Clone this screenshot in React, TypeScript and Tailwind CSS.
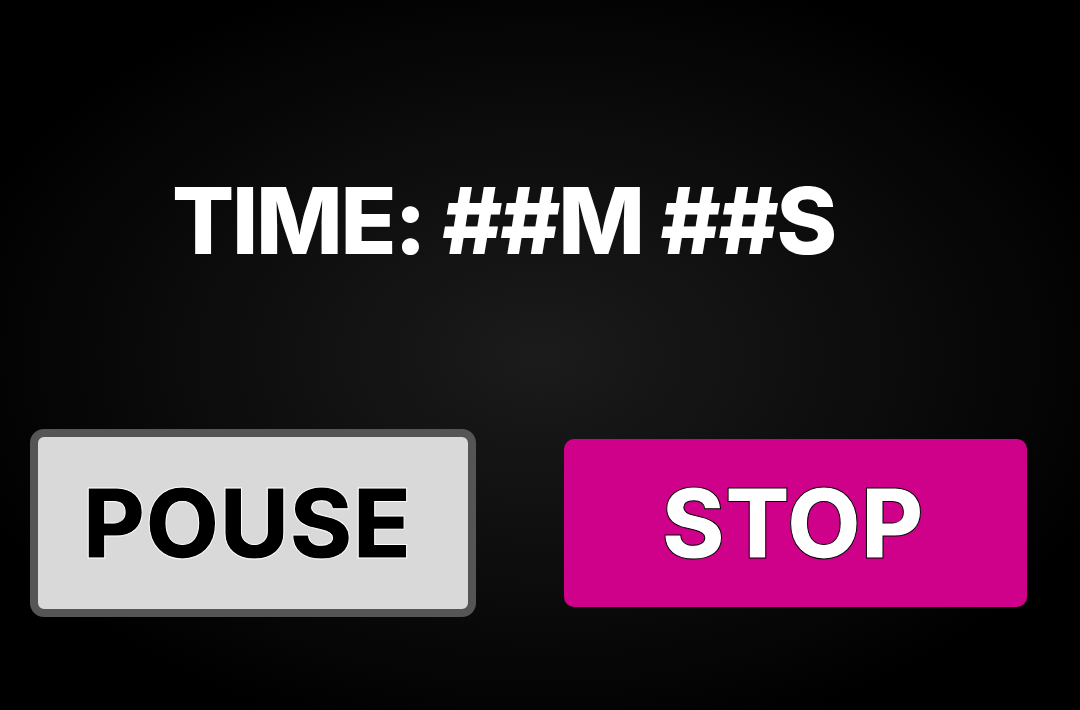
import React from 'react';

const App: React.FC = () => {
  return (
    <div
      className="h-[710px] w-full overflow-hidden bg-[radial-gradient(ellipse_at_center,#1b1b1b_0%,#0c0c0c_45%,#000_80%)]"
      style={{ fontFamily: 'Inter, "Noto Sans", sans-serif' }}
    >
      <div className="pt-[175px] pl-[172px]">
        <h1 className="text-[92px] leading-none font-extrabold text-white tracking-[-0.025em]">
          TIME: ##M ##S
        </h1>
      </div>

      <div className="mt-[162px] flex items-center pl-[30px]">
        <button className="flex h-[188px] w-[446px] items-center justify-center rounded-[14px] border-[8px] border-[#555555] bg-[#d9d9d9] pr-[12px]">
          <span className="text-[96px] leading-none font-extrabold text-black [-webkit-text-stroke:1px_white]">
            POUSE
          </span>
        </button>
        <button className="ml-[88px] flex h-[168px] w-[463px] items-center justify-center rounded-[10px] bg-[#cf0089] pr-[6px]">
          <span className="text-[96px] leading-none font-extrabold text-white [-webkit-text-stroke:1px_black]">
            STOP
          </span>
        </button>
      </div>
    </div>
  );
};

export default App;
